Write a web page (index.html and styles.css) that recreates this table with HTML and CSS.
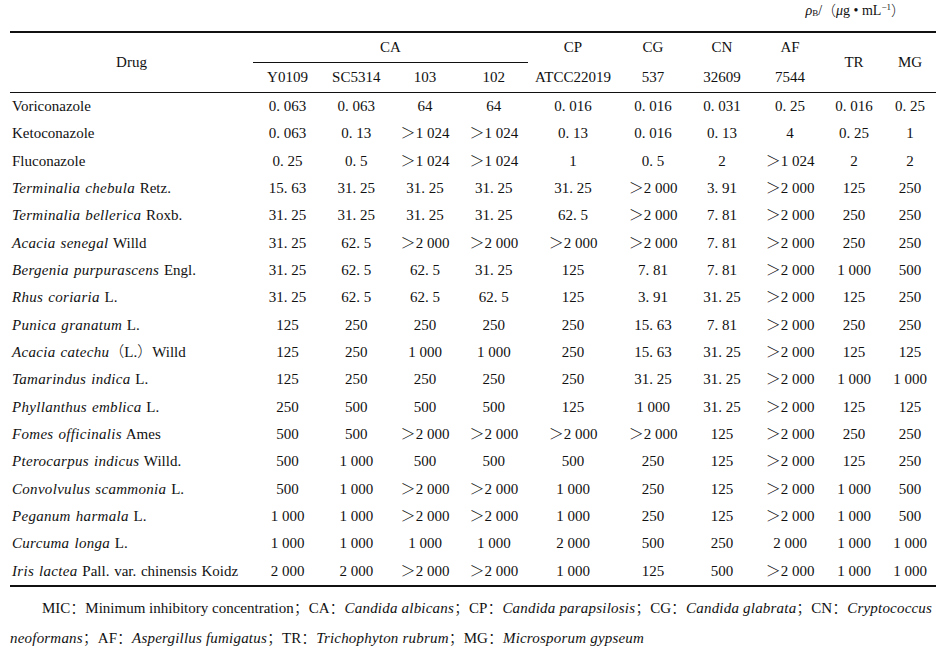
FILE: index.html
```html
<!DOCTYPE html>
<html lang="en">
<head>
<meta charset="utf-8">
<title>MIC table</title>
<link rel="stylesheet" href="styles.css">
</head>
<body>
<div class="page">
  <div class="unit"><i>ρ</i><sub>B</sub>/<span class="fw">（</span><i>μ</i>g • mL<sup>−1</sup><span class="fw">）</span></div>
  <table class="mic">
    <colgroup>
      <col class="c-drug"><col class="c-ca"><col class="c-ca2"><col class="c-ca"><col class="c-ca2">
      <col class="c-cp"><col class="c-cg"><col class="c-cn"><col class="c-af"><col class="c-tr"><col class="c-mg">
    </colgroup>
    <thead>
      <tr class="h1">
        <th rowspan="2">Drug</th>
        <th colspan="4" class="ca">CA</th>
        <th>CP</th><th>CG</th><th>CN</th><th>AF</th>
        <th rowspan="2">TR</th><th rowspan="2">MG</th>
      </tr>
      <tr class="h2">
        <th>Y0109</th><th>SC5314</th><th>103</th><th>102</th>
        <th>ATCC22019</th><th>537</th><th>32609</th><th>7544</th>
      </tr>
    </thead>
    <tbody>
      <tr><td class="drug">Voriconazole</td><td>0. 063</td><td>0. 063</td><td>64</td><td>64</td><td>0. 016</td><td>0. 016</td><td>0. 031</td><td>0. 25</td><td>0. 016</td><td>0. 25</td></tr>
      <tr><td class="drug">Ketoconazole</td><td>0. 063</td><td>0. 13</td><td><span class="gt">＞</span>1 024</td><td><span class="gt">＞</span>1 024</td><td>0. 13</td><td>0. 016</td><td>0. 13</td><td>4</td><td>0. 25</td><td>1</td></tr>
      <tr><td class="drug">Fluconazole</td><td>0. 25</td><td>0. 5</td><td><span class="gt">＞</span>1 024</td><td><span class="gt">＞</span>1 024</td><td>1</td><td>0. 5</td><td>2</td><td><span class="gt">＞</span>1 024</td><td>2</td><td>2</td></tr>
      <tr><td class="drug"><i>Terminalia chebula</i> Retz.</td><td>15. 63</td><td>31. 25</td><td>31. 25</td><td>31. 25</td><td>31. 25</td><td><span class="gt">＞</span>2 000</td><td>3. 91</td><td><span class="gt">＞</span>2 000</td><td>125</td><td>250</td></tr>
      <tr><td class="drug"><i>Terminalia bellerica</i> Roxb.</td><td>31. 25</td><td>31. 25</td><td>31. 25</td><td>31. 25</td><td>62. 5</td><td><span class="gt">＞</span>2 000</td><td>7. 81</td><td><span class="gt">＞</span>2 000</td><td>250</td><td>250</td></tr>
      <tr><td class="drug"><i>Acacia senegal</i> Willd</td><td>31. 25</td><td>62. 5</td><td><span class="gt">＞</span>2 000</td><td><span class="gt">＞</span>2 000</td><td><span class="gt">＞</span>2 000</td><td><span class="gt">＞</span>2 000</td><td>7. 81</td><td><span class="gt">＞</span>2 000</td><td>250</td><td>250</td></tr>
      <tr><td class="drug"><i>Bergenia purpurascens</i> Engl.</td><td>31. 25</td><td>62. 5</td><td>62. 5</td><td>31. 25</td><td>125</td><td>7. 81</td><td>7. 81</td><td><span class="gt">＞</span>2 000</td><td>1 000</td><td>500</td></tr>
      <tr><td class="drug"><i>Rhus coriaria</i> L.</td><td>31. 25</td><td>62. 5</td><td>62. 5</td><td>62. 5</td><td>125</td><td>3. 91</td><td>31. 25</td><td><span class="gt">＞</span>2 000</td><td>125</td><td>250</td></tr>
      <tr><td class="drug"><i>Punica granatum</i> L.</td><td>125</td><td>250</td><td>250</td><td>250</td><td>250</td><td>15. 63</td><td>7. 81</td><td><span class="gt">＞</span>2 000</td><td>250</td><td>250</td></tr>
      <tr><td class="drug"><i>Acacia catechu</i><span class="fw">（</span>L.<span class="fw">）</span>Willd</td><td>125</td><td>250</td><td>1 000</td><td>1 000</td><td>250</td><td>15. 63</td><td>31. 25</td><td><span class="gt">＞</span>2 000</td><td>125</td><td>125</td></tr>
      <tr><td class="drug"><i>Tamarindus indica</i> L.</td><td>125</td><td>250</td><td>250</td><td>250</td><td>250</td><td>31. 25</td><td>31. 25</td><td><span class="gt">＞</span>2 000</td><td>1 000</td><td>1 000</td></tr>
      <tr><td class="drug"><i>Phyllanthus emblica</i> L.</td><td>250</td><td>500</td><td>500</td><td>500</td><td>125</td><td>1 000</td><td>31. 25</td><td><span class="gt">＞</span>2 000</td><td>125</td><td>125</td></tr>
      <tr><td class="drug"><i>Fomes officinalis</i> Ames</td><td>500</td><td>500</td><td><span class="gt">＞</span>2 000</td><td><span class="gt">＞</span>2 000</td><td><span class="gt">＞</span>2 000</td><td><span class="gt">＞</span>2 000</td><td>125</td><td><span class="gt">＞</span>2 000</td><td>250</td><td>250</td></tr>
      <tr><td class="drug"><i>Pterocarpus indicus</i> Willd.</td><td>500</td><td>1 000</td><td>500</td><td>500</td><td>500</td><td>250</td><td>125</td><td><span class="gt">＞</span>2 000</td><td>125</td><td>250</td></tr>
      <tr><td class="drug"><i>Convolvulus scammonia</i> L.</td><td>500</td><td>1 000</td><td><span class="gt">＞</span>2 000</td><td><span class="gt">＞</span>2 000</td><td>1 000</td><td>250</td><td>125</td><td><span class="gt">＞</span>2 000</td><td>1 000</td><td>500</td></tr>
      <tr><td class="drug"><i>Peganum harmala</i> L.</td><td>1 000</td><td>1 000</td><td><span class="gt">＞</span>2 000</td><td><span class="gt">＞</span>2 000</td><td>1 000</td><td>250</td><td>125</td><td><span class="gt">＞</span>2 000</td><td>1 000</td><td>500</td></tr>
      <tr><td class="drug"><i>Curcuma longa</i> L.</td><td>1 000</td><td>1 000</td><td>1 000</td><td>1 000</td><td>2 000</td><td>500</td><td>250</td><td>2 000</td><td>1 000</td><td>1 000</td></tr>
      <tr><td class="drug"><i>Iris lactea</i> Pall. var. chinensis Koidz</td><td>2 000</td><td>2 000</td><td><span class="gt">＞</span>2 000</td><td><span class="gt">＞</span>2 000</td><td>1 000</td><td>125</td><td>500</td><td><span class="gt">＞</span>2 000</td><td>1 000</td><td>1 000</td></tr>
    </tbody>
  </table>
  <div class="note">
    <div class="note-line first">MIC<span class="fw">：</span>Minimum inhibitory concentration<span class="fw">；</span>CA<span class="fw">：</span><i>Candida albicans</i><span class="fw">；</span>CP<span class="fw">：</span><i>Candida parapsilosis</i><span class="fw">；</span>CG<span class="fw">：</span><i>Candida glabrata</i><span class="fw">；</span>CN<span class="fw">：</span><i>Cryptococcus</i></div>
    <div class="note-line"><i>neoformans</i><span class="fw">；</span>AF<span class="fw">：</span><i>Aspergillus fumigatus</i><span class="fw">；</span>TR<span class="fw">：</span><i>Trichophyton rubrum</i><span class="fw">；</span>MG<span class="fw">：</span><i>Microsporum gypseum</i></div>
  </div>
</div>
</body>
</html>
```

FILE: styles.css
```css
html, body {
  margin: 0;
  padding: 0;
  background: #ffffff;
}

body {
  font-family: "Liberation Serif", "Times New Roman", "DejaVu Serif", serif;
  font-size: 15px;
  color: #111111;
}

.page {
  width: 941px;
  height: 653px;
  overflow: hidden;
}

.fw,
.gt {
  font-family: "Noto Sans CJK SC", "Liberation Serif", serif;
  font-weight: 300;
  line-height: 0;
}

.unit {
  height: 31px;
  line-height: 22px;
  font-size: 14px;
  text-align: right;
  padding-right: 36px;
}

.unit sub {
  font-size: 9px;
  line-height: 0;
  vertical-align: -1px;
}

.unit sup {
  font-size: 9px;
  line-height: 0;
  vertical-align: 5px;
}

.mic {
  margin-left: 10px;
  width: 926px;
  table-layout: fixed;
  border-collapse: collapse;
  border-top: 2px solid #111;
  border-bottom: 2px solid #111;
}

.c-drug { width: 243px; }
.c-ca { width: 69px; }
.c-ca2 { width: 68.5px; }
.c-cp { width: 90px; }
.c-cg { width: 70px; }
.c-cn { width: 68px; }
.c-af { width: 68px; }
.c-tr { width: 60px; }
.c-mg { width: 52px; }

.mic th {
  font-weight: normal;
  padding: 0;
  text-align: center;
  white-space: nowrap;
}

.mic .h1 th,
.mic .h2 th {
  height: 29px;
  line-height: 29px;
}

.mic th.ca {
  border-bottom: 1px solid #111;
}

.mic thead {
  border-bottom: 1px solid #111;
}

.mic td {
  padding: 0;
  height: 27.33px;
  line-height: 27px;
  text-align: center;
  white-space: nowrap;
}

.mic td.drug {
  text-align: left;
  padding-left: 2px;
  font-variant-ligatures: none;
  word-spacing: 1px;
}

.mic td.drug i {
  letter-spacing: 0.3px;
}

.note {
  padding-top: 6px;
  padding-left: 10px;
}

.note-line {
  white-space: nowrap;
  height: 30px;
  line-height: 30px;
  font-variant-ligatures: none;
}

.note-line i {
  letter-spacing: 0.2px;
}

.note-line.first {
  padding-left: 32px;
}
```
